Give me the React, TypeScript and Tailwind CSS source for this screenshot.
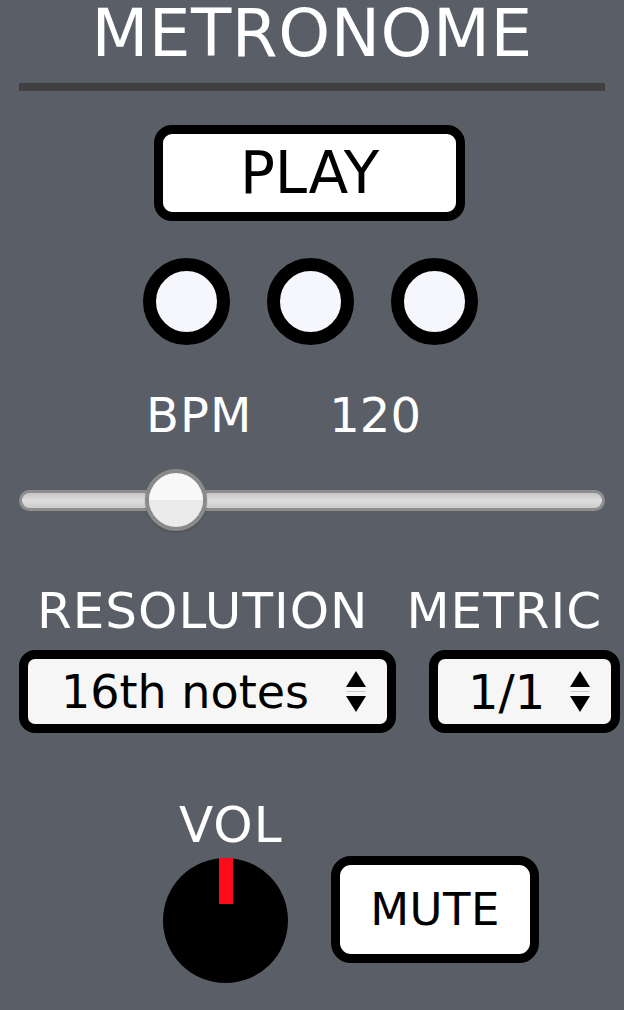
import React from 'react';

const FONT = { fontFamily: '"DejaVu Sans", Verdana, sans-serif' };

function Arrows() {
  return (
    <svg width="20" height="42" viewBox="0 0 20 42" className="shrink-0">
      <polygon points="10,0 20,16 0,16" fill="#000" />
      <line x1="0" y1="20.5" x2="20" y2="20.5" stroke="#c8c8c8" strokeWidth="1" />
      <polygon points="0,25 20,25 10,41" fill="#000" />
    </svg>
  );
}

function Lamp() {
  return <div className="w-[87px] h-[87px] rounded-full border-[13px] border-black bg-[#f6f7fc]" />;
}

export default function App() {
  return (
    <div className="w-[624px] h-[1010px] bg-[#5a5e67] text-white overflow-hidden" style={FONT}>
      {/* title */}
      <div className="h-[83px] pt-[3px] text-center text-[66px] leading-[62px] tracking-[0.5px]">METRONOME</div>
      <div className="mx-[19px] h-[8px] bg-[#3f3f3f]" />

      {/* play */}
      <button className="mt-[34px] ml-[154px] w-[311px] h-[96px] rounded-[18px] border-[9px] border-black bg-white text-black text-[58px] leading-none flex items-center justify-center">
        PLAY
      </button>

      {/* beat lamps */}
      <div className="mt-[37px] ml-[143px] flex gap-[37px]">
        <Lamp />
        <Lamp />
        <Lamp />
      </div>

      {/* bpm */}
      <div className="mt-[46px] flex text-[48px] leading-none h-[48px]">
        <span className="ml-[146px] tracking-[1px]">BPM</span>
        <span className="ml-[77px]">120</span>
      </div>

      {/* slider */}
      <div className="mt-[30px] mx-[19px] h-[62px] relative flex items-center">
        <div className="w-full h-[21px] rounded-full bg-[#8e8e8e] p-[3px]">
          <div className="h-full rounded-full bg-gradient-to-b from-[#c6c6c6] via-[#dedede] to-[#cbcbcb]" />
        </div>
        <div className="absolute left-[126px] top-0 w-[62px] h-[62px] rounded-full border-[4px] border-[#8a8a8a] overflow-hidden shadow-[0_1px_2px_rgba(0,0,0,0.25)]">
          <div className="h-1/2 bg-[#f8f8f8]" />
          <div className="h-1/2 bg-[#ebebeb]" />
        </div>
      </div>

      {/* labels */}
      <div className="mt-[55px] flex text-[50px] leading-none h-[49px] tracking-[1px]">
        <span className="ml-[37px]">RESOLUTION</span>
        <span className="ml-[38px]">METRIC</span>
      </div>

      {/* selects */}
      <div className="mt-[15px] ml-[19px] flex gap-[33px] text-black">
        <div className="w-[377px] h-[83px] rounded-[16px] border-[9px] border-black bg-[#f6f6f6] flex items-center pl-[33px] pr-[21px]">
          <span className="flex-1 text-[46px] leading-none">16th notes</span>
          <Arrows />
        </div>
        <div className="w-[191px] h-[83px] rounded-[16px] border-[9px] border-black bg-[#f6f6f6] flex items-center pl-[30px] pr-[21px]">
          <span className="flex-1 text-[48px] leading-none">1/1</span>
          <Arrows />
        </div>
      </div>

      {/* volume */}
      <div className="mt-[67px] ml-[163px] flex gap-[43px]">
        <div className="w-[125px] flex flex-col">
          <div className="pl-[16px] text-[50px] leading-none h-[49px] tracking-[1px]">VOL</div>
          <div className="mt-[9px] w-[125px] h-[125px] rounded-full bg-black flex justify-center">
            <div className="w-[14px] h-[46px] bg-[#ff0a18]" />
          </div>
        </div>
        <button className="mt-[56px] w-[208px] h-[107px] rounded-[20px] border-[9px] border-black bg-white text-black text-[45px] leading-none tracking-[0.5px] flex items-center justify-center">
          MUTE
        </button>
      </div>
    </div>
  );
}
